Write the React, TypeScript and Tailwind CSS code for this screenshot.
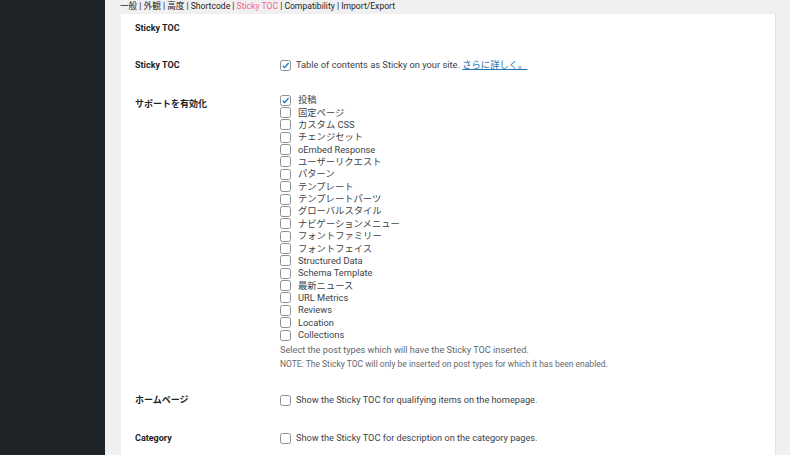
import { ReactNode } from "react";

const postTypes = [
  { label: "投稿", checked: true },
  { label: "固定ページ" },
  { label: "カスタム CSS" },
  { label: "チェンジセット" },
  { label: "oEmbed Response" },
  { label: "ユーザーリクエスト" },
  { label: "パターン" },
  { label: "テンプレート" },
  { label: "テンプレートパーツ" },
  { label: "グローバルスタイル" },
  { label: "ナビゲーションメニュー" },
  { label: "フォントファミリー" },
  { label: "フォントフェイス" },
  { label: "Structured Data" },
  { label: "Schema Template" },
  { label: "最新ニュース" },
  { label: "URL Metrics" },
  { label: "Reviews" },
  { label: "Location" },
  { label: "Collections" },
];

const tabs = ["一般", "外観", "高度", "Shortcode", "Sticky TOC", "Compatibility", "Import/Export"];

function Checkbox({ checked }: { checked?: boolean }) {
  return (
    <span className="w-[11px] h-[11px] shrink-0 rounded-[2.5px] border border-[#8c8f94] bg-white flex items-center justify-center">
      {checked && (
        <svg viewBox="0 0 10 10" className="w-[9px] h-[9px]">
          <path d="M1.8 5.2 L4 7.4 L8.4 2.2" fill="none" stroke="#2271b1" strokeWidth="1.4" />
        </svg>
      )}
    </span>
  );
}

function Row({ label, className, labelClass, children }: { label: string; className?: string; labelClass?: string; children: ReactNode }) {
  return (
    <div className={`flex ${className ?? ""}`}>
      <div className={`w-[145px] shrink-0 font-bold text-[9px] leading-[12px] text-[#1d2327] ${labelClass ?? ""}`}>{label}</div>
      <div className="flex-1">{children}</div>
    </div>
  );
}

export default function App() {
  return (
    <div
      className="flex w-[790px] h-[455px] overflow-hidden bg-[#f0f0f1]"
      style={{ fontFamily: "Roboto, 'Noto Sans CJK JP', sans-serif" }}
    >
      <div className="w-[105px] shrink-0 bg-[#1d2327]" />
      <div className="flex-1 flex flex-col pl-[15px] pr-[14px]">
        <div className="h-[14px] text-[8.6px] leading-[12px] text-[#1d2327] whitespace-nowrap">
          {tabs.map((t, i) => (
            <span key={t}>
              {i > 0 && <span> | </span>}
              <span className={t === "Sticky TOC" ? "text-[#f0648c]" : ""}>{t}</span>
            </span>
          ))}
        </div>
        <div className="flex-1 ml-[1px] bg-white border-r border-[#e2e2e2] pl-[14px] pt-[8px]">
          <div className="font-bold text-[9px] leading-[12px] text-[#1d2327]">Sticky TOC</div>

          <Row label="Sticky TOC" className="mt-[25px]">
            <div className="flex items-center h-[12px] gap-[5px] text-[9.3px] text-[#3c434a]">
              <Checkbox checked />
              <span>
                Table of contents as Sticky on your site.{" "}
                <a className="text-[#2271b1] underline">さらに詳しく。</a>
              </span>
            </div>
          </Row>

          <Row label="サポートを有効化" className="mt-[23px]" labelClass="pt-[4px]">
            <div className="flex flex-col">
              {postTypes.map((p) => (
                <div key={p.label} className="flex items-center h-[12.37px] gap-[7px] text-[9.3px] text-[#3c434a]">
                  <Checkbox checked={p.checked} />
                  <span>{p.label}</span>
                </div>
              ))}
            </div>
            <p className="mt-[3px] text-[9.2px] leading-[12px] text-[#646970]">
              Select the post types which will have the Sticky TOC inserted.
            </p>
            <p className="mt-[2px] text-[8.5px] leading-[12px] text-[#646970]">
              NOTE: The Sticky TOC will only be inserted on post types for which it has been enabled.
            </p>
          </Row>

          <Row label="ホームページ" className="mt-[24px]">
            <div className="flex items-center h-[12px] gap-[5px] text-[9.2px] text-[#3c434a]">
              <Checkbox />
              <span>Show the Sticky TOC for qualifying items on the homepage.</span>
            </div>
          </Row>

          <Row label="Category" className="mt-[26px]">
            <div className="flex items-center h-[12px] gap-[5px] text-[9.2px] text-[#3c434a]">
              <Checkbox />
              <span>Show the Sticky TOC for description on the category pages.</span>
            </div>
          </Row>
        </div>
      </div>
    </div>
  );
}
